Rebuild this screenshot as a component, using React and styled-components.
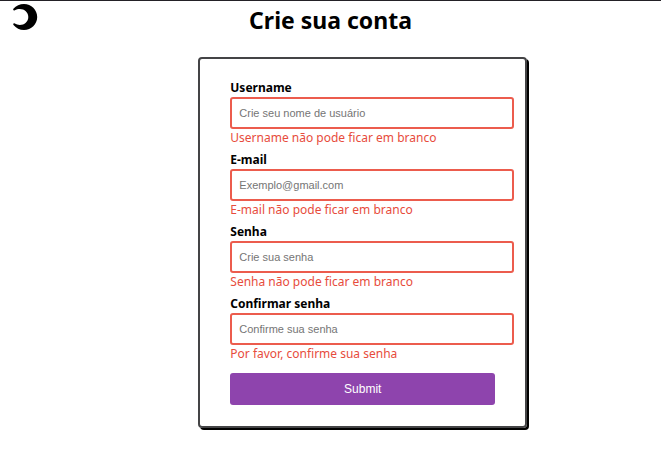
import React from "react";
import styled, { createGlobalStyle } from "styled-components";

const GlobalStyle = createGlobalStyle`
  * { box-sizing: border-box; }
  body {
    margin: 0;
    background: #fff;
    color: #000;
    font-family: "Noto Sans", sans-serif;
  }
`;

const Page = styled.div`
  border-top: 1px solid #232126;
  padding-bottom: 24px;
`;

const Header = styled.header`
  display: grid;
  grid-template-columns: 48px 1fr 48px;
  align-items: start;
  height: 56px;
`;

const ThemeButton = styled.button`
  margin: 2px 0 0 12px;
  padding: 0;
  width: 26px;
  height: 28px;
  border: 0;
  background: none;
  cursor: pointer;

  svg { display: block; }
`;

const Title = styled.h1`
  margin: 0;
  padding-top: 3px;
  font-size: 23px;
  line-height: 32px;
  font-weight: 700;
  text-align: center;
`;

const Form = styled.form`
  margin-left: 30%;
  max-width: 329px;
  padding: 20px 11px 21px 30px;
  border: 2px solid #444446;
  border-radius: 4px;
  box-shadow: 2px 2px 0 #000;
`;

const Field = styled.div`
  display: flex;
  flex-direction: column;
  height: 72px;
`;

const Label = styled.label`
  font-size: 12px;
  line-height: 18px;
  font-weight: 700;
`;

const Input = styled.input`
  width: 100%;
  height: 32px;
  padding: 0 7px;
  border: 2px solid #ec5c4d;
  border-radius: 3px;
  background: #fff;
  font-family: "Liberation Sans", Arial, sans-serif;
  font-size: 11px;
  color: #222;
  outline: none;

  &::placeholder { color: #757575; opacity: 1; }
`;

const ErrorText = styled.span`
  font-size: 12px;
  line-height: 18px;
  color: #e74c3c;
`;

const SubmitButton = styled.button`
  display: block;
  width: calc(100% - 19px);
  height: 32px;
  margin-top: 6px;
  border: 0;
  border-radius: 3px;
  background: #8e44ad;
  color: #fff;
  font-family: "Liberation Sans", Arial, sans-serif;
  font-size: 12px;
  cursor: pointer;
`;

const fields = [
  { id: "username", label: "Username", type: "text", placeholder: "Crie seu nome de usuário", error: "Username não pode ficar em branco" },
  { id: "email", label: "E-mail", type: "email", placeholder: "Exemplo@gmail.com", error: "E-mail não pode ficar em branco" },
  { id: "password", label: "Senha", type: "password", placeholder: "Crie sua senha", error: "Senha não pode ficar em branco" },
  { id: "confirm", label: "Confirmar senha", type: "password", placeholder: "Confirme sua senha", error: "Por favor, confirme sua senha" },
];

export default function App() {
  return (
    <Page>
      <GlobalStyle />
      <Header>
        <ThemeButton type="button" aria-label="Alternar tema">
          <svg width="26" height="28" viewBox="0 0 26 28" aria-hidden="true">
            <path
              d="M1.400 5.800C4 2.700 7.900 1 12 1c7.300 0 13.200 5.800 13.200 13S19.300 27 12 27c-4.200 0-8-1.900-10.500-5C.7 20.800 1.700 19.900 2.800 20.500c1.500.9 3.200 1.400 5 1.400 4.700 0 8.500-3.500 8.500-8S12.500 5.900 7.800 5.900c-1.800 0-3.500.5-5 1.400C1.700 7.900.7 7 1.400 5.800z"
              fill="#000"
            />
          </svg>
        </ThemeButton>
        <Title>Crie sua conta</Title>
      </Header>
      <Form noValidate onSubmit={(event) => event.preventDefault()}>
        {fields.map(({ id, label, type, placeholder, error }) => (
          <Field key={id}>
            <Label htmlFor={id}>{label}</Label>
            <Input id={id} type={type} placeholder={placeholder} aria-invalid="true" aria-describedby={`${id}-error`} />
            <ErrorText id={`${id}-error`}>{error}</ErrorText>
          </Field>
        ))}
        <SubmitButton type="submit">Submit</SubmitButton>
      </Form>
    </Page>
  );
}
